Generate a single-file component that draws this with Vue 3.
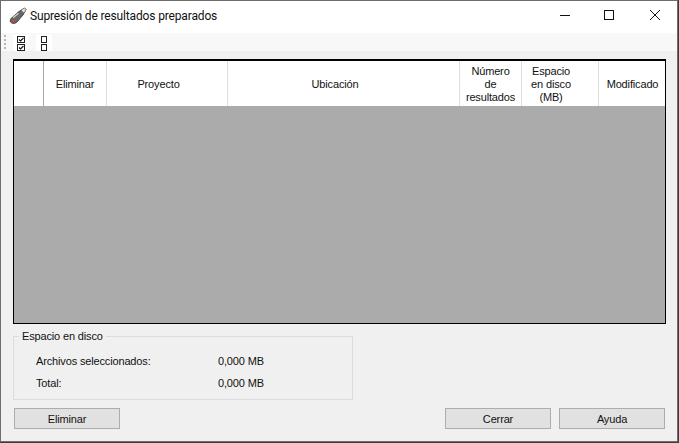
<template>
  <div class="window">
    <header class="titlebar">
      <svg class="app-icon" width="18" height="18" viewBox="0 0 18 18">
        <path d="M2 11.5 L10 4.5 L15.5 1 L17 2.5 L14 8 L7.5 15.5 C5.5 17 2.5 16.5 1.5 15 C1 13.8 1.2 12.5 2 11.5 Z" fill="#6a6866" stroke="#2b2a29" stroke-width="0.8"/>
        <path d="M12 3.2 L15.5 1 L17 2.5 L15 6 Z" fill="#e6e1d8" stroke="#6b6b6b" stroke-width="0.5"/>
        <path d="M4 10.8 L9.5 6.2" stroke="#cfcbc6" stroke-width="1.4" fill="none"/>
        <path d="M3 13.5 L6 15" stroke="#c9483a" stroke-width="1.5" fill="none"/>
      </svg>
      <span class="title">Supresión de resultados preparados</span>
      <div class="controls">
        <span class="ctl"><svg width="10" height="10" viewBox="0 0 10 10"><path d="M0 5.5H10" stroke="#111" stroke-width="1"/></svg></span>
        <span class="ctl"><svg width="10" height="10" viewBox="0 0 10 10"><rect x=".5" y=".5" width="9" height="9" fill="none" stroke="#111"/></svg></span>
        <span class="ctl"><svg width="10" height="10" viewBox="0 0 10 10"><path d="M0 0L10 10M10 0L0 10" stroke="#111" stroke-width="1"/></svg></span>
      </div>
    </header>

    <div class="toolbar">
      <span class="grip"><i v-for="n in 4" :key="n"></i></span>
      <span class="tool">
        <svg class="check" width="9" height="16" viewBox="0 0 9 16">
          <rect x=".5" y="1.5" width="7" height="6" fill="#fff" stroke="#222"/>
          <rect x=".5" y="9.5" width="7" height="6" fill="#fff" stroke="#222"/>
          <path d="M2 4.5L3.5 6L6.5 3M2 12.5L3.5 14L6.5 11" fill="none" stroke="#111" stroke-width="1.1"/>
        </svg>
      </span>
      <span class="tool second">
        <svg width="6" height="16" viewBox="0 0 6 16">
          <rect x=".5" y="1.5" width="5" height="6" fill="#fff" stroke="#222"/>
          <rect x=".5" y="9.5" width="5" height="6" fill="#fff" stroke="#222"/>
        </svg>
      </span>
    </div>

    <main class="content">
      <section class="grid">
        <div class="head">
          <div v-for="c in columns" :key="c.label" class="cell" :class="c.cls" :style="{ width: c.width + 'px' }">
            <span>{{ c.label }}</span>
          </div>
        </div>
        <div class="empty"></div>
      </section>

      <fieldset class="disk">
        <legend>Espacio en disco</legend>
        <div class="row"><span class="k">Archivos seleccionados:</span><span>0,000 MB</span></div>
        <div class="row"><span class="k">Total:</span><span>0,000 MB</span></div>
      </fieldset>

      <footer class="actions">
        <button>Eliminar</button>
        <span class="spacer"></span>
        <button>Cerrar</button>
        <button>Ayuda</button>
      </footer>
    </main>
  </div>
</template>

<script setup>
const columns = [
  { label: '', width: 29, cls: 'first' },
  { label: 'Eliminar', width: 63 },
  { label: 'Proyecto', width: 121, cls: 'offset' },
  { label: 'Ubicación', width: 232, cls: 'offset' },
  { label: 'Número de resultados', width: 62, cls: 'tight' },
  { label: 'Espacio en disco (MB)', width: 77, cls: 'narrow' },
  { label: 'Modificado', width: 67 }
]
</script>

<style>
html, body { margin: 0; background: #3f3b36; }
</style>

<style scoped>
.window {
  box-sizing: border-box;
  width: 678px;
  height: 442px;
  background: #f0f0f0;
  border: 1px solid #6d6d6d;
  font-family: "Liberation Sans", Arial, sans-serif;
  font-size: 11px;
  letter-spacing: -0.15px;
  color: #111;
  display: flex;
  flex-direction: column;
  overflow: hidden;
}
.titlebar {
  height: 32px;
  flex: none;
  background: #fff;
  display: flex;
  align-items: center;
  padding-left: 8px;
}
.app-icon { flex: none; margin-bottom: 2px; }
.title {
  margin-left: 3px;
  margin-bottom: 2px;
  font-family: Roboto, sans-serif;
  font-size: 12px;
  letter-spacing: -0.15px;
}
.controls { margin-left: auto; display: flex; align-self: flex-start; }
.ctl {
  width: 45px;
  height: 28px;
  display: flex;
  align-items: center;
  justify-content: center;
}
.ctl:nth-child(2) svg { margin-left: -2px; }
.toolbar {
  height: 18px;
  flex: none;
  background: #f8f8f8;
  display: flex;
  align-items: center;
}
.grip {
  width: 3px;
  margin-left: 3px;
  display: flex;
  flex-direction: column;
  gap: 2px;
}
.grip i { width: 2px; height: 2px; background: #b5b5b5; }
.tool {
  width: 16px;
  height: 16px;
  margin-left: 6px;
  margin-top: 2px;
  background: #fff;
  display: flex;
  align-items: center;
  justify-content: center;
}
.tool.second { margin-left: 7px; }
.check { margin-left: 1px; }
.content {
  flex: 1;
  padding: 8px 11px 0 12px;
  display: flex;
  flex-direction: column;
}
.grid {
  box-sizing: border-box;
  height: 265px;
  border: 1px solid #000;
  border-top-width: 2px;
  background: #ababab;
  display: flex;
  flex-direction: column;
}
.head {
  height: 45px;
  background: #fff;
  display: flex;
  padding-left: 1px;
}
.cell {
  box-sizing: border-box;
  flex: none;
  border-right: 1px solid #dedede;
  display: flex;
  align-items: center;
  justify-content: center;
  text-align: center;
  line-height: 13px;
  padding: 1px 3px 0;
}
.cell.first { border-right-color: #a8a8a8; }
.cell.offset { padding-right: 20px; }
.cell.tight { padding-left: 6px; padding-right: 6px; }
.cell.narrow { padding-left: 6px; padding-right: 24px; }
.cell:last-child { border-right: 0; }
.empty { flex: 1; }
.disk {
  box-sizing: border-box;
  width: 340px;
  height: 70px;
  margin: 6px 0 0 0;
  padding: 8px 0 0 22px;
  border: 1px solid #dcdcdc;
}
legend {
  margin-left: -17px;
  padding: 0 3px;
}
.row {
  display: flex;
  height: 22px;
  align-items: center;
}
.k { width: 182px; }
.actions {
  display: flex;
  gap: 8px;
  margin: 8px 1px 0;
}
.spacer { flex: 1; }
button {
  width: 106px;
  height: 21px;
  box-sizing: border-box;
  padding: 0;
  background: #e1e1e1;
  border: 1px solid #adadad;
  font: inherit;
  letter-spacing: inherit;
  color: #111;
}
</style>
